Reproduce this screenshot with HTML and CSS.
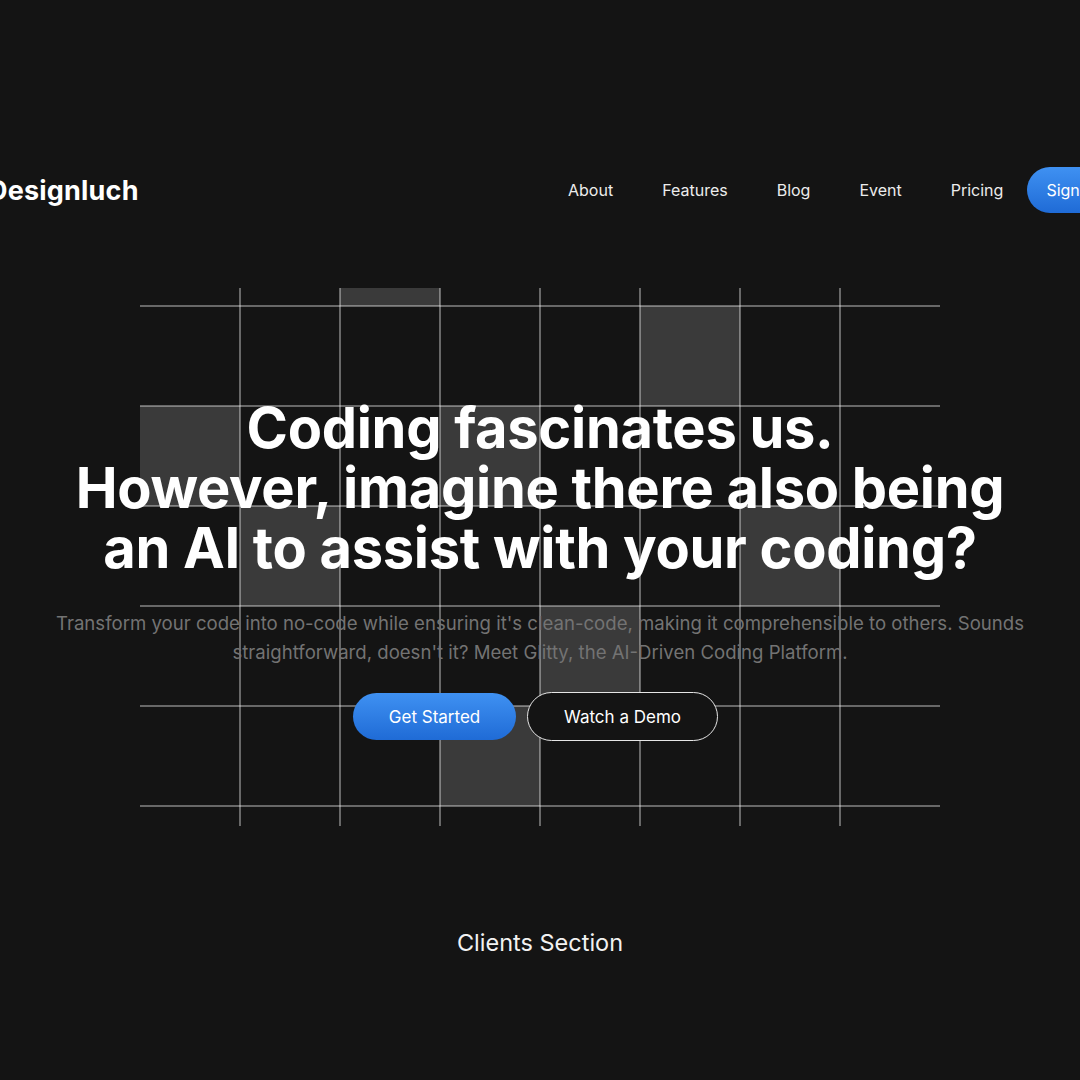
FILE: index.html
```html
<!DOCTYPE html>
<html lang="en">
<head>
<meta charset="utf-8">
<title>Designluch</title>
<link rel="stylesheet" href="styles.css">
</head>
<body>
<header class="nav">
  <div class="logo">Designluch</div>
  <nav class="menu">
    <a class="menu-link" href="#">About</a>
    <a class="menu-link" href="#">Features</a>
    <a class="menu-link" href="#">Blog</a>
    <a class="menu-link" href="#">Event</a>
    <a class="menu-link" href="#">Pricing</a>
    <a class="btn btn-primary btn-sign" href="#">Sign Up</a>
  </nav>
</header>

<section class="hero">
  <svg class="hero-grid" width="800" height="538" viewBox="0 0 800 538" aria-hidden="true">
    <g fill="#3a3a3a">
      <rect x="200" y="0" width="100" height="18"/>
      <rect x="500" y="18" width="100" height="100"/>
      <rect x="0" y="118" width="100" height="100"/>
      <rect x="300" y="118" width="100" height="100"/>
      <rect x="100" y="218" width="100" height="100"/>
      <rect x="600" y="218" width="100" height="100"/>
      <rect x="400" y="318" width="100" height="100"/>
      <rect x="300" y="418" width="100" height="100"/>
    </g>
    <g stroke="rgba(255,255,255,0.36)" stroke-width="2">
      <line x1="0" y1="18" x2="800" y2="18"/>
      <line x1="0" y1="118" x2="800" y2="118"/>
      <line x1="0" y1="218" x2="800" y2="218"/>
      <line x1="0" y1="318" x2="800" y2="318"/>
      <line x1="0" y1="418" x2="800" y2="418"/>
      <line x1="0" y1="518" x2="800" y2="518"/>
      <line x1="100" y1="0" x2="100" y2="538"/>
      <line x1="200" y1="0" x2="200" y2="538"/>
      <line x1="300" y1="0" x2="300" y2="538"/>
      <line x1="400" y1="0" x2="400" y2="538"/>
      <line x1="500" y1="0" x2="500" y2="538"/>
      <line x1="600" y1="0" x2="600" y2="538"/>
      <line x1="700" y1="0" x2="700" y2="538"/>
    </g>
  </svg>
  <div class="hero-content">
    <h1 class="hero-title">Coding fascinates us.<br>However, imagine there also being<br>an AI to assist with your coding?</h1>
    <p class="hero-text">Transform your code into no-code while ensuring it's clean-code, making it comprehensible to others. Sounds straightforward, doesn't it? Meet Glitty, the AI-Driven Coding Platform.</p>
    <div class="hero-actions">
      <a class="btn btn-primary btn-lg" href="#">Get Started</a>
      <a class="btn btn-outline btn-lg" href="#">Watch a Demo</a>
    </div>
  </div>
</section>

<section class="clients">
  <h2 class="clients-title">Clients Section</h2>
</section>
</body>
</html>
```

FILE: styles.css
```css
* { box-sizing: border-box; }

html, body {
  margin: 0;
  padding: 0;
  background: #141414;
  overflow: hidden;
}

body {
  width: 1080px;
  height: 1080px;
  font-family: Inter, "Noto Sans", "Liberation Sans", sans-serif;
  color: #ffffff;
}

a { text-decoration: none; color: inherit; }

.nav {
  display: flex;
  align-items: center;
  justify-content: space-between;
  width: 1137px;
  margin-left: -12px;
  padding-top: 167px;
  height: 213px;
}

.logo {
  font-size: 27px;
  font-weight: 700;
  letter-spacing: 0.2px;
  color: #ffffff;
}

.menu {
  display: flex;
  align-items: center;
}

.menu-link {
  font-size: 16px;
  color: #ececec;
  margin-right: 49px;
}

.menu-link:nth-child(5) { margin-right: 24px; }

.btn {
  display: inline-flex;
  align-items: center;
  justify-content: center;
  border-radius: 999px;
  white-space: nowrap;
}

.btn-primary {
  background: linear-gradient(180deg, #3f91f2 0%, #1f6bd6 100%);
  color: #ffffff;
}

.btn-sign {
  height: 46px;
  padding: 0 19px;
  font-size: 16px;
}

.hero {
  position: relative;
  margin-top: 75px;
  height: 538px;
}

.hero-grid {
  position: absolute;
  left: 140px;
  top: 0;
}

.hero-content {
  position: relative;
  display: flex;
  flex-direction: column;
  align-items: center;
  padding-top: 110px;
}

.hero-title {
  margin: 0;
  font-size: 56px;
  line-height: 60px;
  font-weight: 700;
  letter-spacing: -0.3px;
  text-align: center;
}

.hero-text {
  margin: 31px 0 0;
  width: 1000px;
  font-size: 18.6px;
  line-height: 29px;
  color: #737373;
  text-align: center;
}

.hero-actions {
  display: flex;
  gap: 11px;
  margin-top: 26px;
  margin-right: 9px;
}

.btn-lg {
  height: 47px;
  font-size: 17px;
}

.btn-primary.btn-lg {
  width: 163px;
}

.btn-outline {
  width: 191px;
  height: 49px;
  margin-top: -1px;
  background: #141414;
  border: 1.5px solid #e6e6e6;
  color: #ffffff;
}

.clients {
  display: flex;
  justify-content: center;
  padding-top: 103px;
}

.clients-title {
  margin: 0;
  font-size: 23.5px;
  font-weight: 400;
  line-height: 28px;
  color: #f2f2f2;
}
```
